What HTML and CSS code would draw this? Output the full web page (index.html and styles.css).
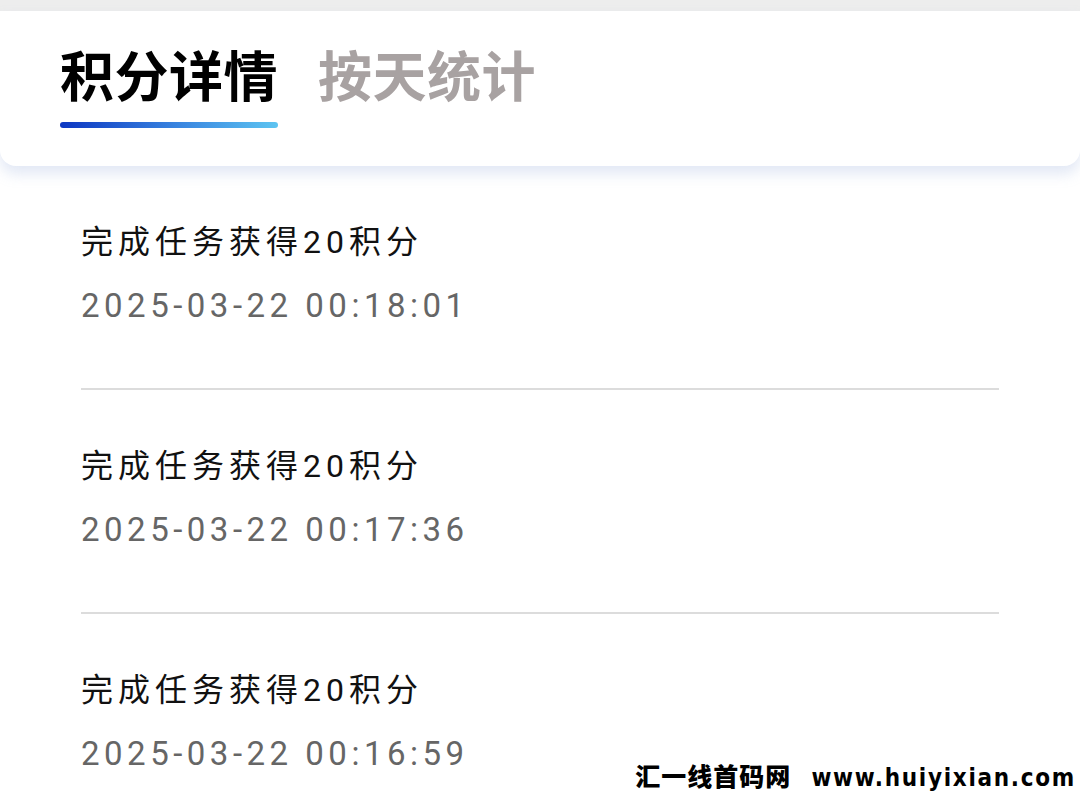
FILE: index.html
```html
<!DOCTYPE html>
<html lang="zh-CN">
<head>
<meta charset="utf-8">
<title>积分详情</title>
<link rel="stylesheet" href="styles.css">
</head>
<body>
<div class="page">
  <div class="topstrip"></div>
  <header class="card">
    <nav class="tabs">
      <div class="tab active">
        <span class="tab-label">积分详情</span>
        <span class="tab-bar"></span>
      </div>
      <div class="tab">
        <span class="tab-label">按天统计</span>
      </div>
    </nav>
  </header>
  <ul class="list">
    <li class="item">
      <div class="item-title">完成任务获得20积分</div>
      <div class="item-time">2025-03-22 00:18:01</div>
    </li>
    <li class="item">
      <div class="item-title">完成任务获得20积分</div>
      <div class="item-time">2025-03-22 00:17:36</div>
    </li>
    <li class="item">
      <div class="item-title">完成任务获得20积分</div>
      <div class="item-time">2025-03-22 00:16:59</div>
    </li>
  </ul>
  <div class="watermark"><span class="wm-cn">汇一线首码网</span><span class="wm-url">www.huiyixian.com</span></div>
</div>
</body>
</html>
```

FILE: styles.css
```css
html, body {
  margin: 0;
  padding: 0;
  background: #ffffff;
}

body {
  font-family: "Roboto", "Noto Sans CJK SC", sans-serif;
  width: 1080px;
  height: 797px;
  overflow: hidden;
}

.page {
  position: relative;
  width: 1080px;
  height: 797px;
  overflow: hidden;
  background: #ffffff;
}

.topstrip {
  height: 11px;
  background: #ededed;
}

.card {
  position: relative;
  z-index: 1;
  background: #ffffff;
  border-radius: 0 0 16px 16px;
  box-shadow: 0 8px 14px rgba(150, 172, 220, 0.28);
  padding: 31px 60px 38px;
}

.tabs {
  display: flex;
  gap: 40px;
  align-items: flex-start;
}

.tab {
  display: flex;
  flex-direction: column;
}

.tab-label {
  font-family: "Noto Sans CJK SC", sans-serif;
  font-size: 54px;
  line-height: 64px;
  font-weight: 700;
  letter-spacing: 0.5px;
  color: #a8a2a2;
}

.tab.active .tab-label {
  color: #000000;
}

.tab-bar {
  display: block;
  height: 6px;
  margin-top: 16px;
  border-radius: 3px;
  background: linear-gradient(90deg, #0d37c2 0%, #3a86e0 55%, #5dc4f1 100%);
}

.list {
  list-style: none;
  margin: 0;
  padding: 0 81px;
}

.item {
  padding: 54px 0 62px;
  border-bottom: 2px solid #dcdcdc;
}

.item-title {
  font-family: "Roboto", "Noto Sans CJK SC", sans-serif;
  font-size: 32px;
  line-height: 44px;
  letter-spacing: 5px;
  color: #111111;
}

.item-time {
  margin-top: 22px;
  font-family: "Roboto", sans-serif;
  font-size: 33px;
  line-height: 40px;
  letter-spacing: 4.5px;
  color: #666666;
}

.watermark {
  position: absolute;
  right: 4px;
  bottom: 5px;
  display: flex;
  align-items: baseline;
  gap: 20px;
  background: #ffffff;
  color: #000000;
  font-weight: 700;
  line-height: 28px;
}

.wm-cn {
  font-family: "Noto Sans CJK SC", sans-serif;
  font-size: 25px;
  font-weight: 900;
  letter-spacing: 1px;
}

.wm-url {
  font-family: "DejaVu Sans", sans-serif;
  font-stretch: condensed;
  font-size: 24px;
  letter-spacing: 1.7px;
}
```
